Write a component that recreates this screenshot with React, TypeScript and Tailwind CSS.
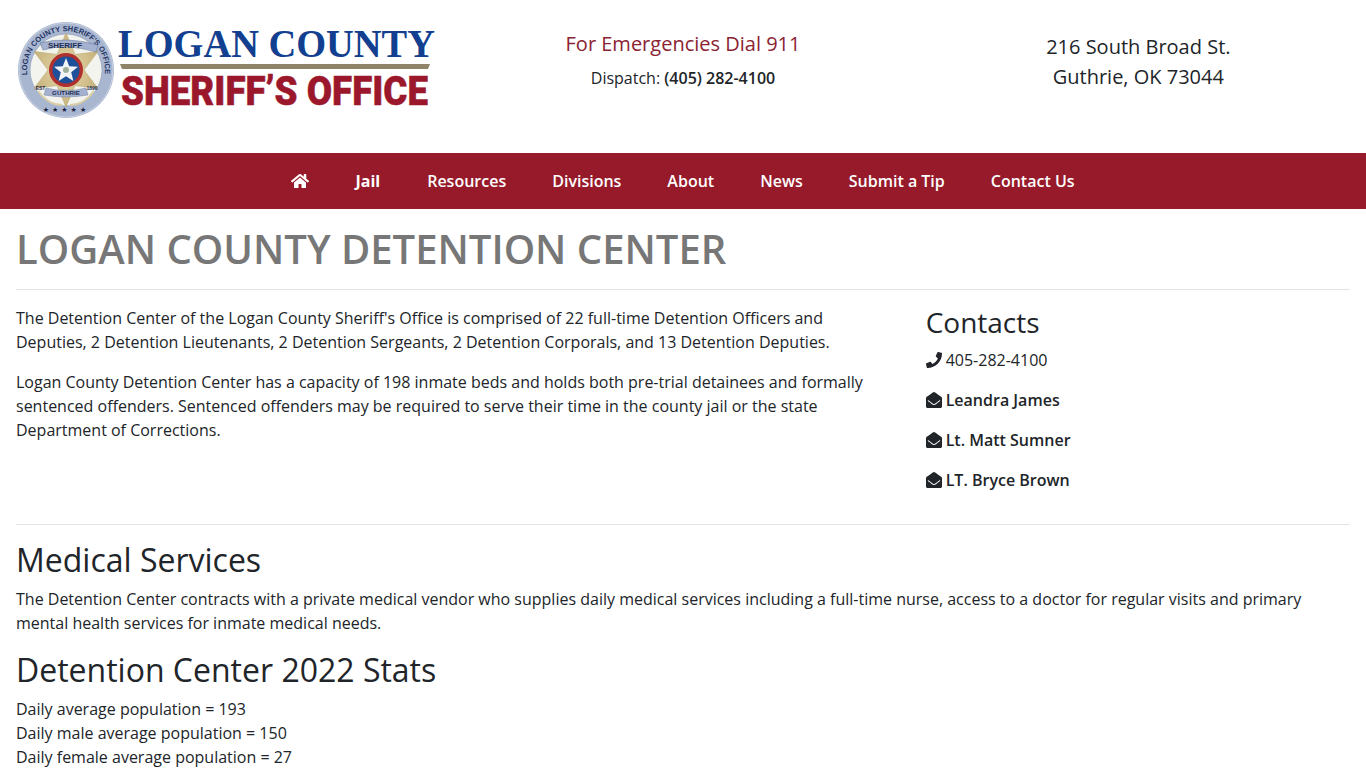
import { FaHome, FaPhone, FaEnvelopeOpen } from "react-icons/fa";

function Logo() {
  const star = "M50 12 L59 33.4 L82 30.5 L68 49 L82 67.5 L59 64.6 L50 86 L41 64.6 L18 67.5 L32 49 L18 30.5 L41 33.4 Z";
  const sans = "'Liberation Sans', sans-serif";
  return (
    <svg width="430" height="100" viewBox="0 0 430 100" className="block">
      <defs>
        <path id="sealTop" d="M11.3 54 A39 39 0 1 1 88.7 54" />
        <radialGradient id="gold" cx="50%" cy="50%" r="55%">
          <stop offset="0%" stopColor="#e9dcae" />
          <stop offset="100%" stopColor="#c4b07a" />
        </radialGradient>
      </defs>
      <circle cx="50" cy="49" r="48" fill="#a9b6d0" />
      <circle cx="50" cy="49" r="47" fill="none" stroke="#c6d0e2" strokeWidth="1" />
      <circle cx="50" cy="49" r="36" fill="#f4f4ef" stroke="#8c9abb" strokeWidth="0.6" />
      <path d="M22 70 Q32 84 46 84" fill="none" stroke="#d8cfa6" strokeWidth="2" />
      <path d="M78 70 Q68 84 54 84" fill="none" stroke="#d8cfa6" strokeWidth="2" />
      <path d={star} fill="url(#gold)" stroke="#b5a266" strokeWidth="0.5" />
      <circle cx="50" cy="49" r="17" fill="#b0302f" />
      <circle cx="50" cy="49" r="13.5" fill="#1d5099" />
      <path d="M50 37 L53.2 45.2 L62 45.7 L55.2 51.3 L57.4 60 L50 55.2 L42.6 60 L44.8 51.3 L38 45.7 L46.8 45.2 Z" fill="#f2f4f8" />
      <circle cx="50" cy="49" r="3" fill="#9fb09c" />
      <text fontFamily={sans} fontWeight="700" fontSize="7.6" fill="#1f3566">
        <textPath href="#sealTop" textLength="131" lengthAdjust="spacingAndGlyphs">LOGAN COUNTY SHERIFF'S OFFICE</textPath>
      </text>
      <path d="M24 22 Q50 15 82 24 L80 31 Q50 22 27 29 Z" fill="#a4b2cf" stroke="#5c6f96" strokeWidth="0.5" />
      <text x="49" y="27" textAnchor="middle" fontFamily={sans} fontWeight="700" fontSize="8" fill="#1f2f55">SHERIFF</text>
      <path d="M30 67 Q50 72 70 67 L72 74 Q50 78 28 74 Z" fill="#a4b2cf" stroke="#5c6f96" strokeWidth="0.4" />
      <text x="50" y="74" textAnchor="middle" fontFamily={sans} fontWeight="700" fontSize="6.2" fill="#1f2f55">GUTHRIE</text>
      <text x="24.5" y="69" textAnchor="middle" fontFamily={sans} fontWeight="700" fontSize="5" fill="#1f2f55">EST</text>
      <text x="76" y="69" textAnchor="middle" fontFamily={sans} fontWeight="700" fontSize="5" fill="#1f2f55">1890</text>
      <text x="50" y="91" textAnchor="middle" fontFamily="'DejaVu Sans', sans-serif" fontSize="7" letterSpacing="3" fill="#14203c">★★★★★</text>

      <text x="102" y="36" fontFamily="'Liberation Serif', serif" fontWeight="700" fontSize="40" fill="#123f8f" textLength="317" lengthAdjust="spacingAndGlyphs">LOGAN COUNTY</text>
      <path d="M104 43 H414 L412 48 H106 Z" fill="#8f8468" />
      <text x="105" y="84" fontFamily="'Roboto', 'Liberation Sans', sans-serif" fontWeight="900" fontSize="41" fill="#9b182c" stroke="#9b182c" strokeWidth="0.5" textLength="307" lengthAdjust="spacingAndGlyphs">SHERIFF’S OFFICE</text>
    </svg>
  );
}

const nav = ["Resources", "Divisions", "About", "News", "Submit a Tip", "Contact Us"];

function Person({ name }: { name: string }) {
  return (
    <p className="mb-4 flex items-center font-semibold text-[#212529]">
      <FaEnvelopeOpen className="mr-1 h-4 w-4 text-[#212529]" />
      {name}
    </p>
  );
}

export default function App() {
  return (
    <div className="h-[768px] overflow-hidden bg-white font-['Open_Sans',sans-serif] text-[16px] leading-6 text-[#212529]">
      <header className="grid h-[153px] grid-cols-3">
        <div className="pl-4 pt-[21px]">
          <Logo />
        </div>
        <div className="pt-[30px] text-center">
          <div className="text-[20px] leading-7 text-[#8b2332]">For Emergencies Dial 911</div>
          <div className="mt-[6px] leading-7">
            Dispatch: <span className="font-semibold">(405) 282-4100</span>
          </div>
        </div>
        <div className="pt-8 text-center text-[20px] leading-[30px]">
          216 South Broad St.
          <br />
          Guthrie, OK 73044
        </div>
      </header>

      <nav className="flex h-14 items-center justify-center bg-[#971a2a] font-semibold text-white">
        <FaHome className="mr-[46px] h-4 w-[18px]" />
        <span className="mr-[47px] font-bold">Jail</span>
        {nav.map((n) => (
          <span key={n} className="mr-[46px] last:mr-0">
            {n}
          </span>
        ))}
      </nav>

      <main className="px-4">
        <h1 className="border-b border-[#e3e3e3] pb-4 pt-4 text-[40px] leading-[48px] font-semibold text-[#777777]">
          LOGAN COUNTY DETENTION CENTER
        </h1>

        <div className="grid grid-cols-[894.67px_1fr] border-b border-[#e3e3e3] pb-4 pt-4">
          <div className="pr-[30px]">
            <p className="mb-4">
              The Detention Center of the Logan County Sheriff's Office is comprised of 22 full-time Detention Officers and Deputies, 2 Detention Lieutenants, 2 Detention Sergeants, 2 Detention Corporals, and 13 Detention Deputies.
            </p>
            <p>
              Logan County Detention Center has a capacity of 198 inmate beds and holds both pre-trial detainees and formally sentenced offenders. Sentenced offenders may be required to serve their time in the county jail or the state Department of Corrections.
            </p>
          </div>
          <div className="pl-[15px]">
            <h3 className="mb-[10px] text-[28px] leading-[32px]">Contacts</h3>
            <p className="mb-4 flex items-center">
              <FaPhone className="mr-1 h-4 w-4 text-[#212529]" />
              405-282-4100
            </p>
            <Person name="Leandra James" />
            <Person name="Lt. Matt Sumner" />
            <Person name="LT. Bryce Brown" />
          </div>
        </div>

        <h2 className="mt-4 mb-2 text-[32px] leading-[38px]">Medical Services</h2>
        <p className="mb-4">
          The Detention Center contracts with a private medical vendor who supplies daily medical services including a full-time nurse, access to a doctor for regular visits and primary mental health services for inmate medical needs.
        </p>
        <h2 className="mb-2 text-[32px] leading-[38px]">Detention Center 2022 Stats</h2>
        <p>
          Daily average population = 193
          <br />
          Daily male average population = 150
          <br />
          Daily female average population = 27
        </p>
      </main>
    </div>
  );
}
